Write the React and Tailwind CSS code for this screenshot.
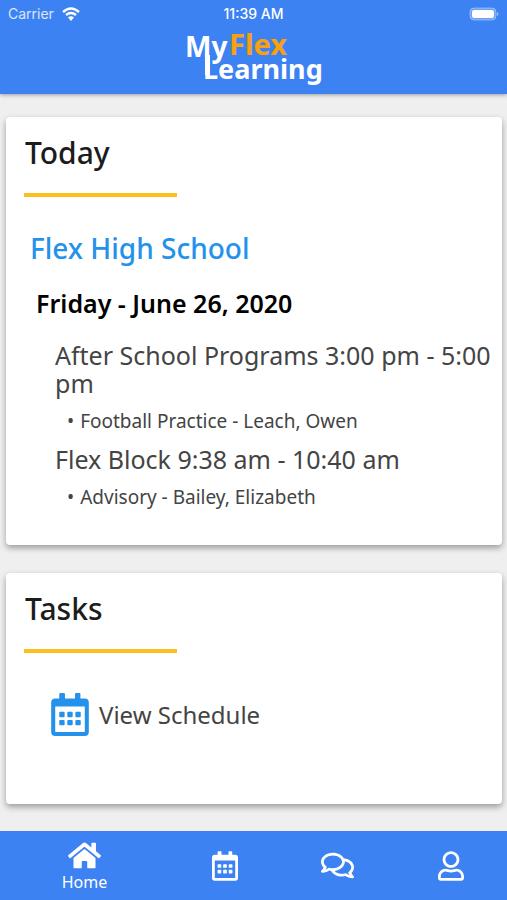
import { useState } from 'react';
import { FaHome, FaRegComments, FaRegUser } from 'react-icons/fa';

const blocks = [
  { title: 'After School Programs', time: '3:00 pm - 5:00 pm', sessions: ['Football Practice - Leach, Owen'] },
  { title: 'Flex Block', time: '9:38 am - 10:40 am', sessions: ['Advisory - Bailey, Elizabeth'] },
];

function CalendarIcon({ className }) {
  return (
    <svg viewBox="0 0 448 512" fill="currentColor" className={className} aria-hidden="true">
      <path
        fillRule="evenodd"
        d="M112 0h40q12 0 12 12v52h120V12q0-12 12-12h40q12 0 12 12v52h52q48 0 48 48v352q0 48-48 48H48q-48 0-48-48V112q0-48 48-48h48V12Q96 0 112 0zM48 160v298q0 6 6 6h340q6 0 6-6V160z"
      />
      <path d="M108 224h40q12 0 12 12v40q0 12-12 12h-40q-12 0-12-12v-40q0-12 12-12zm96 0h40q12 0 12 12v40q0 12-12 12h-40q-12 0-12-12v-40q0-12 12-12zm96 0h40q12 0 12 12v40q0 12-12 12h-40q-12 0-12-12v-40q0-12 12-12zM108 320h40q12 0 12 12v40q0 12-12 12h-40q-12 0-12-12v-40q0-12 12-12zm96 0h40q12 0 12 12v40q0 12-12 12h-40q-12 0-12-12v-40q0-12 12-12zm96 0h40q12 0 12 12v40q0 12-12 12h-40q-12 0-12-12v-40q0-12 12-12z" />
    </svg>
  );
}

function Logo() {
  return (
    <svg viewBox="0 0 139 56" className="h-14 w-[139px] overflow-visible font-['Noto_Sans',sans-serif] font-bold" role="img" aria-label="MyFlex Learning">
      <text x="1" y="24" fontSize="28" fill="#fff">My</text>
      <text x="45" y="22" fontSize="29" fill="#f9a10d">Flex</text>
      <text x="19" y="46" fontSize="27" fill="#fff">Learning</text>
      <rect x="21" y="22" width="5" height="20" fill="#fff" />
    </svg>
  );
}

function StatusBar() {
  return (
    <div className="grid h-7 grid-cols-3 items-center px-2 text-sm text-white font-['Inter',sans-serif]">
      <div className="flex items-center gap-2 text-white/80">
        <span>Carrier</span>
        <svg viewBox="0 0 18 14" className="h-3.5 w-[18px] text-white" aria-hidden="true">
          <path d="M1 5Q9-2 17 5M4 8Q9 4 14 8" fill="none" stroke="currentColor" strokeWidth="2.4" />
          <path d="M6 10.500Q9 8 12 10.500L9 14z" fill="currentColor" />
        </svg>
      </div>
      <span className="text-center font-medium">11:39 AM</span>
      <svg viewBox="0 0 30 14" className="h-3.5 w-[30px] justify-self-end" aria-hidden="true">
        <rect x="1" y="1" width="26" height="12" rx="4" fill="#fff" fillOpacity="0.25" stroke="#fff" strokeOpacity="0.35" />
        <rect x="3" y="3" width="22" height="8" rx="2" fill="#fff" />
        <path d="M28 5q3 2 0 4z" fill="#fff" fillOpacity="0.5" />
      </svg>
    </div>
  );
}

function Card({ title, className, children }) {
  return (
    <section className={`rounded bg-white pr-1 pl-[18px] shadow-[0_3px_6px_rgba(0,0,0,0.35)] ${className}`}>
      <h2 className="pt-4 pl-px text-3xl leading-10 font-medium text-[#1c1c1c]">{title}</h2>
      <div className="mt-5 h-1 w-[153px] bg-[#fdbf1d]"></div>
      {children}
    </section>
  );
}

function NavItem({ label, showLabel, active, onClick, children }) {
  return (
    <button
      type="button"
      aria-label={label}
      aria-current={active ? 'page' : undefined}
      onClick={onClick}
      className="flex cursor-pointer flex-col items-center justify-center"
    >
      {children}
      {showLabel && <span className="text-base leading-5">{label}</span>}
    </button>
  );
}

export default function App() {
  const [tab, setTab] = useState('Home');

  return (
    <div className="flex min-h-screen flex-col bg-[#efefef] font-['Noto_Sans',sans-serif]">
      {/* Header */}
      <header className="bg-[#3d82f3] pb-[5px] shadow-[0_1px_4px_rgba(0,0,0,0.35)]">
        <StatusBar />
        <div className="flex justify-center pt-[5px]">
          <Logo />
        </div>
      </header>

      <main className="flex grow flex-col gap-7 pt-[23px] pr-[5px] pb-[27px] pl-1.5">
        {/* Today */}
        <Card title="Today" className="pb-6">
          <h3 className="mt-[31px] pl-1.5 text-[28px] leading-10 font-medium text-[#2492ea]">Flex High School</h3>
          <h4 className="mt-[19px] pl-3 text-[25px] leading-8 font-semibold text-black">Friday - June 26, 2020</h4>
          <div className="mt-[22px] pl-[31px] text-[#444]">
            {blocks.map((block) => (
              <div key={block.title}>
                <p className="text-[25px] leading-7">{`${block.title} ${block.time}`}</p>
                <ul className="py-2 pl-3">
                  {block.sessions.map((session) => (
                    <li key={session} className="flex gap-1.5 text-[19px] leading-8">
                      <span aria-hidden="true">•</span>
                      {session}
                    </li>
                  ))}
                </ul>
              </div>
            ))}
          </div>
        </Card>

        {/* Tasks */}
        <Card title="Tasks" className="grow">
          <a href="#schedule" className="mt-10 mb-[68px] ml-[27px] flex items-center gap-2.5 text-2xl text-[#444]">
            <CalendarIcon className="h-[43px] w-[38px] text-[#2492ea]" />
            View Schedule
          </a>
        </Card>
      </main>

      {/* Bottom tabs */}
      <nav className="sticky bottom-0 grid h-[69px] grid-cols-[3fr_2fr_2fr_2fr] bg-[#3d82f3] text-white">
        <NavItem label="Home" showLabel active={tab === 'Home'} onClick={() => setTab('Home')}>
          <FaHome className="h-[33px] w-[33px]" />
        </NavItem>
        <NavItem label="Schedule" active={tab === 'Schedule'} onClick={() => setTab('Schedule')}>
          <CalendarIcon className="h-[30px] w-[26px]" />
        </NavItem>
        <NavItem label="Messages" active={tab === 'Messages'} onClick={() => setTab('Messages')}>
          <FaRegComments className="h-[33px] w-[33px]" />
        </NavItem>
        <NavItem label="Profile" active={tab === 'Profile'} onClick={() => setTab('Profile')}>
          <FaRegUser className="h-[30px] w-[26px]" />
        </NavItem>
      </nav>
    </div>
  );
}
